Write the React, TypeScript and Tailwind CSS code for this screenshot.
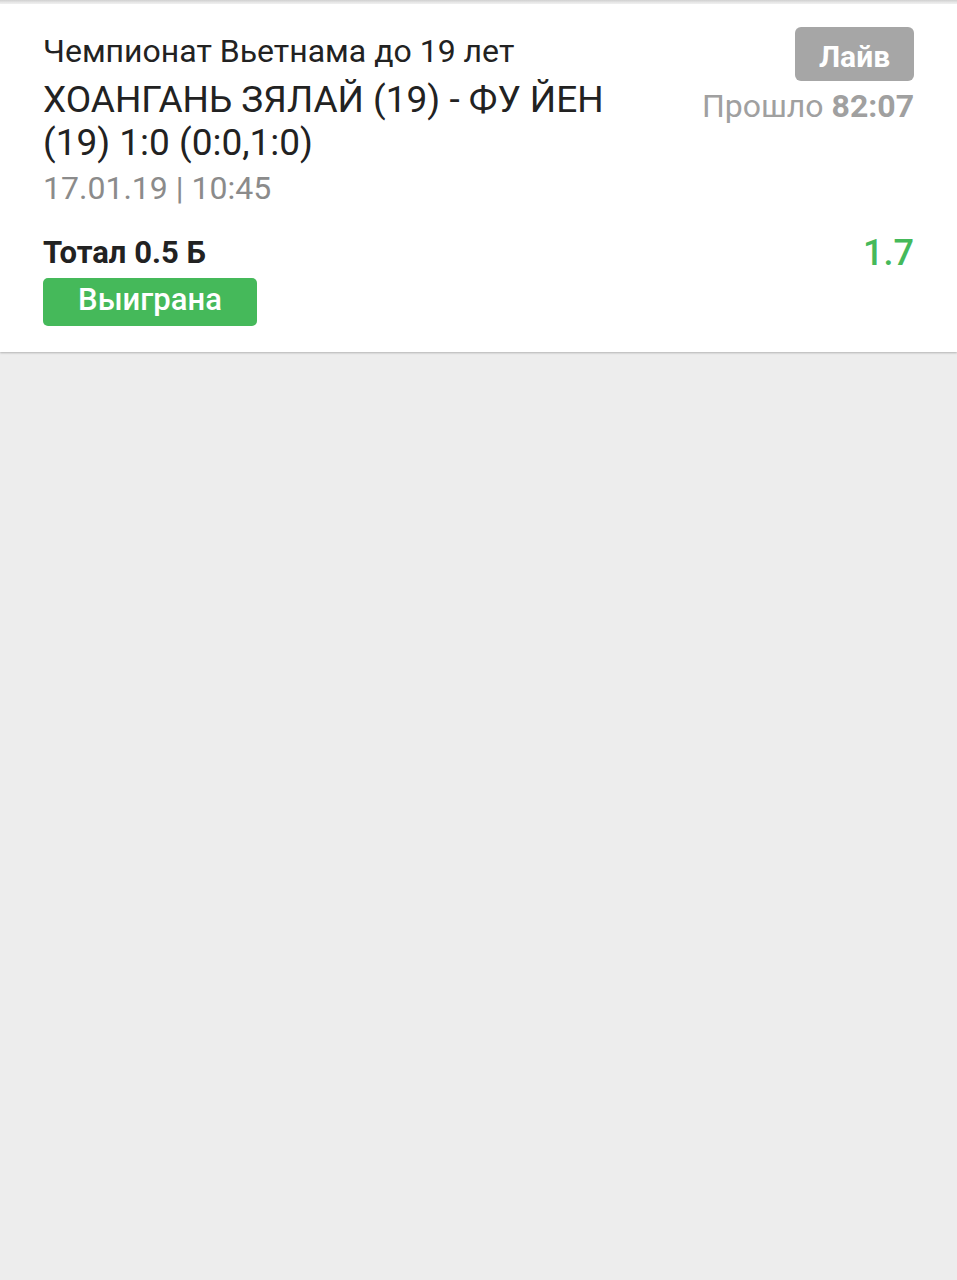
export default function App() {
  return (
    <div className="min-h-[1280px] bg-[#ededed] font-['Roboto',sans-serif]">
      <div className="h-[4px] bg-gradient-to-b from-[#d0d0d0] to-[#f6f6f6]" />
      <div className="bg-white px-[43px] pt-[23px] pb-[26px] shadow-[0_1px_2px_rgba(0,0,0,0.25)]">
        <div className="flex justify-between">
          <div className="flex flex-col mt-[1px]">
            <div className="text-[32px] leading-[46px] text-[#222]">Чемпионат Вьетнама до 19 лет</div>
            <div className="mt-[4px] text-[37px] leading-[43px] text-[#222] w-[600px]">ХОАНГАНЬ ЗЯЛАЙ (19) - ФУ ЙЕН (19) 1:0 (0:0,1:0)</div>
            <div className="text-[32px] leading-[49px] text-[#8b8b8b]">17.01.19 | 10:45</div>
          </div>
          <div className="flex flex-col items-end">
            <div className="h-[54px] w-[119px] pt-[5px] rounded-[6px] bg-[#a6a6a6] text-white font-bold text-[30px] flex items-center justify-center">Лайв</div>
            <div className="text-[32px] leading-[50px] text-[#a0a0a0]">
              Прошло <span className="font-bold">82:07</span>
            </div>
          </div>
        </div>
        <div className="flex justify-between items-start mt-[20px]">
          <div className="flex flex-col items-start">
            <div className="text-[31px] leading-[40px] font-bold text-[#222]">Тотал 0.5 Б</div>
            <div className="mt-[5px] h-[48px] w-[214px] pb-[3px] rounded-[5px] bg-[#45b95a] text-white font-medium text-[31px] flex items-center justify-center">Выиграна</div>
          </div>
          <div className="text-[36px] leading-[40px] font-medium text-[#45b95a]">1.7</div>
        </div>
      </div>
    </div>
  );
}
